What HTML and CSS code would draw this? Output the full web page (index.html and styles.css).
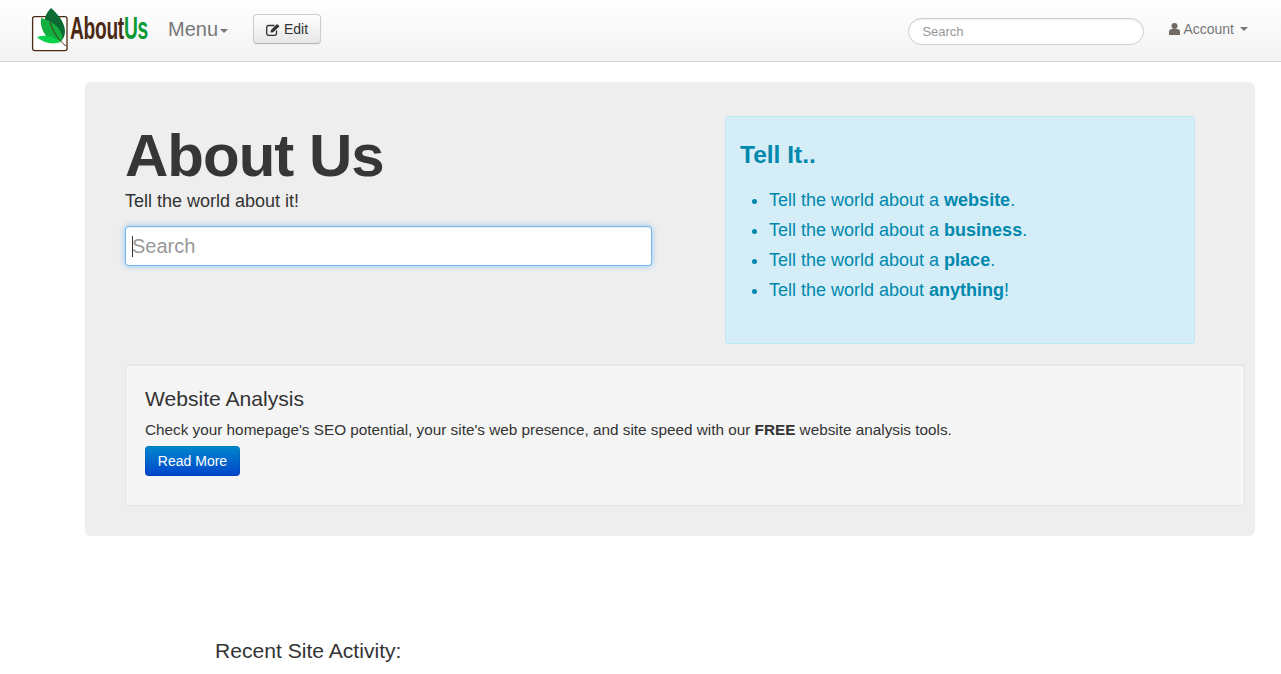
FILE: index.html
```html
<!DOCTYPE html>
<html lang="en">
<head>
<meta charset="utf-8">
<title>About Us</title>
<link rel="stylesheet" href="styles.css">
</head>
<body>
<header class="navbar">
  <a class="brand" href="#">
    <svg class="brand-mark" width="38" height="44" viewBox="0 0 38 44">
      <rect x="1.600" y="8.600" width="34.400" height="34" rx="2" fill="#fff" stroke="#4b2a14" stroke-width="1.300"/>
      <path d="M20 0C15 5 13 10 14 16L31 32C36 26 36 14 20 0Z" fill="#0b6b32"/>
      <path d="M10 10C9 18 12 26 19 32L31 33C33 24 25 14 10 10Z" fill="#12ae3e"/>
      <path d="M6 29C12 35 22 37 30 34C24 29 15 26 6 29Z" fill="#0bd24c"/>
      <path d="M19 14C22 23 26 31 35 38" fill="none" stroke="#4b2a14" stroke-width="1"/>
    </svg>
    <span class="brand-text">About<span class="brand-us">Us</span></span>
  </a>
  <a class="menu-link" href="#">Menu<span class="caret"></span></a>
  <button class="edit-btn" type="button">
    <svg class="edit-icon" width="14" height="13" viewBox="0 0 14 13">
      <path d="M10.500 7.500V10.500A1.800 1.800 0 0 1 8.700 12.300H2.500A1.800 1.800 0 0 1 .7 10.500V4.300A1.800 1.800 0 0 1 2.500 2.500H8.500" fill="none" stroke="#333" stroke-width="1.300"/>
      <path d="M4.500 9.500L5 7L11 1L13.500 3.200L7.200 9.300Z" fill="#333"/>
    </svg>
    Edit
  </button>
  <div class="nav-right">
    <input class="nav-search" type="text" placeholder="Search">
    <a class="account" href="#">
      <svg class="user-icon" width="11" height="12" viewBox="0 0 11 12">
        <circle cx="5.500" cy="3" r="3" fill="#6f6a63"/>
        <path d="M0 12V8.500C0 7 1.500 6 3 6H8C9.500 6 11 7 11 8.500V12Z" fill="#6f6a63"/>
      </svg>
      Account<span class="caret caret-account"></span>
    </a>
  </div>
</header>

<main class="content">
  <section class="hero">
    <div class="hero-top">
      <div class="hero-left">
        <h1 class="hero-title">About Us</h1>
        <p class="hero-tag">Tell the world about it!</p>
        <div class="hero-search">
          <span class="text-cursor"></span>
          <input class="hero-input" type="text" placeholder="Search">
        </div>
      </div>
      <aside class="tell">
        <h3 class="tell-title">Tell It..</h3>
        <ul class="tell-list">
          <li>Tell the world about a <b>website</b>.</li>
          <li>Tell the world about a <b>business</b>.</li>
          <li>Tell the world about a <b>place</b>.</li>
          <li>Tell the world about <b>anything</b>!</li>
        </ul>
      </aside>
    </div>
    <div class="well">
      <h4 class="well-title">Website Analysis</h4>
      <p class="well-text">Check your homepage's SEO potential, your site's web presence, and site speed with our <b>FREE</b> website analysis tools.</p>
      <a class="read-more" href="#">Read More</a>
    </div>
  </section>
  <h4 class="recent">Recent Site Activity:</h4>
</main>
</body>
</html>
```
FILE: styles.css
```css
* { box-sizing: border-box; }
html, body { margin: 0; padding: 0; }
body {
  background: #fff;
  color: #333;
  font-family: "Liberation Sans", Arial, sans-serif;
  font-size: 14px;
  height: 674px;
  overflow: hidden;
}
a { text-decoration: none; }

.navbar {
  height: 62px;
  display: flex;
  align-items: flex-start;
  padding-left: 31px;
  background: linear-gradient(#fff, #f2f2f2);
  border-bottom: 1px solid #d4d4d4;
}
.brand { display: flex; align-items: flex-start; margin-top: 8px; width: 137px; flex: none; }
.brand-mark { display: block; flex: none; }
.brand-text {
  font-family: "Liberation Sans", sans-serif;
  font-weight: 700;
  font-size: 32px;
  line-height: 41px;
  color: #4b2a14;
  letter-spacing: -0.5px;
  margin-left: 1px;
  transform: scaleX(.6);
  transform-origin: left center;
}
.brand-us { color: #0a9a35; }
.menu-link { color: #777; font-size: 20px; line-height: 30px; margin-top: 14px; width: 85px; flex: none; }
.caret {
  display: inline-block;
  width: 0;
  height: 0;
  vertical-align: middle;
  border-top: 4px solid #777;
  border-left: 4px solid transparent;
  border-right: 4px solid transparent;
  margin-left: 2px;
}
.edit-btn {
  margin-top: 14px;
  width: 68px;
  height: 30px;
  padding: 0 0 0 12px;
  display: flex;
  align-items: center;
  gap: 4px;
  font: 14px "Liberation Sans", Arial, sans-serif;
  color: #333;
  background: linear-gradient(#fff, #e6e6e6);
  border: 1px solid #ccc;
  border-bottom-color: #b3b3b3;
  border-radius: 4px;
  box-shadow: inset 0 1px 0 rgba(255,255,255,.2), 0 1px 2px rgba(0,0,0,.05);
}
.nav-right { margin-left: auto; display: flex; align-items: flex-start; margin-right: 33px; }
.nav-search {
  width: 236px;
  height: 27px;
  margin-top: 18px;
  padding: 0 13px;
  font: 13px "Liberation Sans", Arial, sans-serif;
  background: #fff;
  border: 1px solid #ccc;
  border-radius: 14px;
  box-shadow: inset 0 1px 1px rgba(0,0,0,.075);
  outline: none;
}
.nav-search::placeholder { color: #999; opacity: 1; }
.account { color: #777; font-size: 14px; line-height: 20px; margin: 19px 0 0 25px; display: flex; align-items: center; }
.user-icon { margin-right: 3px; }
.caret-account { margin-left: 6px; border-top-color: #777; }

.content { padding: 20px 26px 0 85px; }
.hero {
  height: 454px;
  padding: 34px 10px 30px 40px;
  background: #eee;
  border-radius: 6px;
}
.hero-top { display: flex; height: 249px; }
.hero-left { width: 600px; }
.hero-title {
  margin: 3px 0 0;
  font-size: 60px;
  line-height: 74px;
  font-weight: 700;
  letter-spacing: -1px;
  color: #363636;
}
.hero-tag { margin: -5px 0 0; font-size: 18px; line-height: 27px; color: #333; }
.hero-search { position: relative; margin-top: 11px; width: 527px; }
.hero-input {
  display: block;
  width: 100%;
  height: 40px;
  padding: 0 6px;
  font: 20px "Liberation Sans", Arial, sans-serif;
  background: #fff;
  border: 1px solid rgba(82,168,236,.8);
  border-radius: 4px;
  box-shadow: inset 0 1px 1px rgba(0,0,0,.075), 0 0 6px rgba(82,168,236,.6);
  outline: none;
}
.hero-input::placeholder { color: #999; opacity: 1; }
.text-cursor { position: absolute; left: 7px; top: 10px; width: 1px; height: 21px; background: #333; z-index: 1; }
.tell {
  width: 470px;
  height: 228px;
  padding: 14px;
  background: #d5edf7;
  border: 1px solid #bce8f1;
  border-radius: 4px;
  color: #0088ad;
}
.tell-title { margin: 9px 0 0; font-size: 24.500px; line-height: 30px; font-weight: 700; color: #0088ad; }
.tell-list { margin: 15px 0 0; padding-left: 29px; font-size: 18px; line-height: 30px; }
.well {
  width: 1120px;
  height: 142px;
  margin-top: -1px;
  padding: 19px;
  background: #f5f5f5;
  border: 1px solid #e3e3e3;
  border-radius: 4px;
  box-shadow: inset 0 1px 1px rgba(0,0,0,.05);
}
.well-title { margin: 0; font-size: 21.100px; line-height: 30px; font-weight: 400; color: #333; }
.well-text { margin: 6px 0 0; font-size: 15.300px; line-height: 20px; color: #333; }
.read-more {
  display: inline-block;
  width: 95px;
  height: 30px;
  margin-top: 6px;
  line-height: 30px;
  text-align: center;
  font-size: 14px;
  color: #fff;
  background: linear-gradient(#0088cc, #0044cc);
  border-radius: 4px;
  box-shadow: inset 0 0 0 1px rgba(0,0,0,.08);
}
.recent { margin: 100px 0 0 130px; font-size: 21.100px; line-height: 30px; font-weight: 400; color: #333; }
```
